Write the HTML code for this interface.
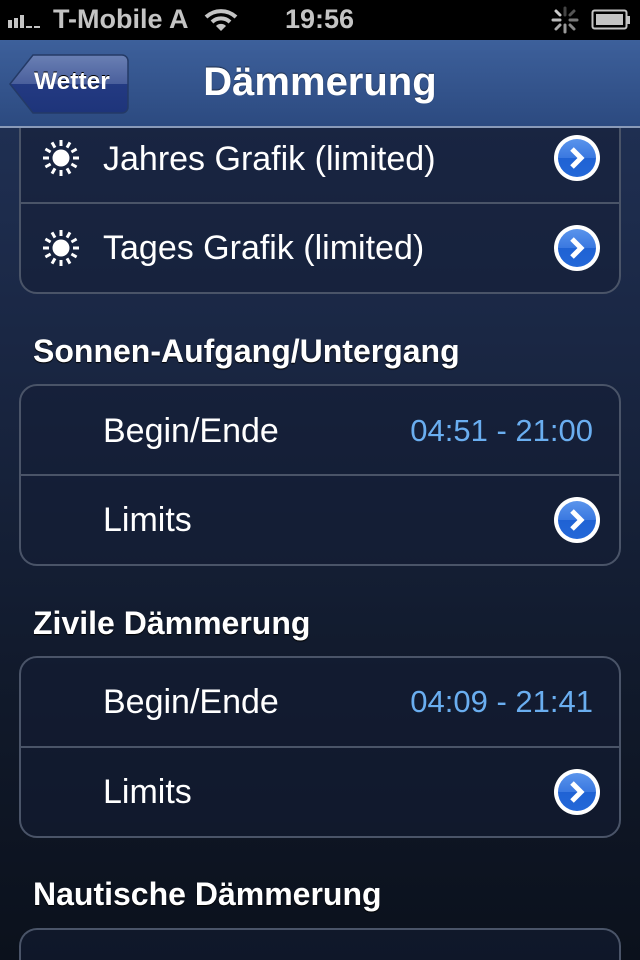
<!DOCTYPE html>
<html><head><meta charset="utf-8"><style>
*{margin:0;padding:0;box-sizing:border-box}
html,body{width:640px;height:960px;overflow:hidden;background:#0b111c}
#w{position:relative;width:640px;height:960px;overflow:hidden;font-family:"Liberation Sans",Arial,sans-serif;background:linear-gradient(#22345a 0%,#1a2744 35%,#111a2c 70%,#0b111c 100%);color:#fff}
.abs{position:absolute}
.status{left:0;top:0;width:640px;height:40px;background:#000;color:#c4c4c4;font-weight:bold;font-size:27px}
.nav{left:0;top:40px;width:640px;height:88px;background:linear-gradient(#3d609b,#2c4a80);border-bottom:2px solid #8a9ab8}
.title{left:0;top:60px;width:640px;height:44px;line-height:44px;text-align:center;font-size:40px;font-weight:bold;text-shadow:0 -1px 1px rgba(0,0,0,.5)}
.group{left:19px;width:602px;border:2px solid #4a5468;border-radius:18px;background:rgba(20,30,52,.55)}
.div{left:19px;width:602px;height:2px;background:#4a5468}
.cell{left:103px;font-size:34px;height:40px;line-height:40px;color:#fff}
.val{right:47px;font-size:31px;height:40px;line-height:40px;color:#6aaef0}
.hdr{left:33px;font-size:32px;height:40px;line-height:40px;font-weight:bold;text-shadow:0 1px 1px #000}
</style></head><body><div id="w">
<div class="abs status">
 <svg class="abs" style="left:8px;top:12px" width="40" height="18"><rect x="0" y="8" width="4" height="8" fill="#c4c4c4"/><rect x="6" y="6" width="4" height="10" fill="#c4c4c4"/><rect x="12" y="3" width="4" height="13" fill="#c4c4c4"/><rect x="18" y="14" width="6" height="2" fill="#c4c4c4"/><rect x="26" y="14" width="6" height="2" fill="#c4c4c4"/></svg>
 <div class="abs" style="left:53px;top:4px">T-Mobile A</div>
 <svg class="abs" style="left:204px;top:8px" width="34" height="24" viewBox="0 0 34 24"><path d="M2 9 A22 22 0 0 1 32 9" stroke="#c4c4c4" stroke-width="4" fill="none"/><path d="M8 14 A13 13 0 0 1 26 14" stroke="#c4c4c4" stroke-width="4" fill="none"/><path d="M12 18 L17 23 L22 18 A7 7 0 0 0 12 18Z" fill="#c4c4c4"/></svg>
 <div class="abs" style="left:285px;top:4px;font-size:27px">19:56</div>
 <svg class="abs" style="left:550px;top:5px" width="30" height="30" viewBox="-15 -15 30 30"><g stroke-width="3" stroke-linecap="round"><line x1="0" y1="-5" x2="0" y2="-12" stroke="#444"/><line x1="5" y1="-5" x2="9" y2="-9" stroke="#555"/><line x1="5" y1="0" x2="12" y2="0" stroke="#777"/><line x1="5" y1="5" x2="9" y2="9" stroke="#888"/><line x1="0" y1="5" x2="0" y2="12" stroke="#999"/><line x1="-5" y1="5" x2="-9" y2="9" stroke="#aaa"/><line x1="-5" y1="0" x2="-12" y2="0" stroke="#bbb"/><line x1="-5" y1="-5" x2="-9" y2="-9" stroke="#ccc"/></g></svg>
 <svg class="abs" style="left:591px;top:9px" width="42" height="22"><rect x="1.5" y="1.5" width="34" height="18" rx="2" fill="none" stroke="#c4c4c4" stroke-width="2"/><rect x="5" y="5" width="27" height="11" fill="#c4c4c4"/><rect x="36" y="7" width="3" height="8" fill="#c4c4c4"/></svg>
</div>
<div class="abs group" style="top:80px;height:214px"></div>
<div class="abs nav"></div>
<svg class="abs" style="left:9px;top:54px" width="121" height="60" viewBox="0 0 121 60"><defs><linearGradient id="bb" x1="0" y1="0" x2="0" y2="1"><stop offset="0" stop-color="#6a80b4"/><stop offset=".5" stop-color="#4a5f9c"/><stop offset=".5" stop-color="#233a82"/><stop offset="1" stop-color="#1e347a"/></linearGradient></defs><path d="M1 30 L24 1 H113 A6 6 0 0 1 119 7 V53 A6 6 0 0 1 113 59 H24 Z" fill="url(#bb)" stroke="#243a66" stroke-width="1.5"/></svg>
<div class="abs" style="left:34px;top:68px;font-size:24.5px;font-weight:bold;text-shadow:0 -1px 0 #000">Wetter</div>
<div class="abs title">Dämmerung</div>

<div class="abs div" style="top:202px"></div>
<div class="abs group" style="top:384px;height:182px"></div>
<div class="abs div" style="top:474px"></div>
<div class="abs group" style="top:656px;height:182px"></div>
<div class="abs div" style="top:746px"></div>
<div class="abs group" style="top:928px;height:32px;border-bottom:none;border-radius:18px 18px 0 0"></div>

<svg width="0" height="0" style="position:absolute"><defs>
<g id="sun"><circle r="8.5" fill="#fff"/><g stroke="#fff" stroke-width="3"><line x1="0" y1="-12" x2="0" y2="-18"/><line x1="0" y1="12" x2="0" y2="18"/><line x1="-12" y1="0" x2="-18" y2="0"/><line x1="12" y1="0" x2="18" y2="0"/><line x1="6" y1="-10.4" x2="9" y2="-15.6"/><line x1="-6" y1="-10.4" x2="-9" y2="-15.6"/><line x1="6" y1="10.4" x2="9" y2="15.6"/><line x1="-6" y1="10.4" x2="-9" y2="15.6"/><line x1="10.4" y1="6" x2="15.6" y2="9"/><line x1="-10.4" y1="6" x2="-15.6" y2="9"/><line x1="10.4" y1="-6" x2="15.6" y2="-9"/><line x1="-10.4" y1="-6" x2="-15.6" y2="-9"/></g></g>
<linearGradient id="bl" x1="0" y1="0" x2="0" y2="1"><stop offset="0" stop-color="#5a94ec"/><stop offset=".5" stop-color="#3a78e0"/><stop offset=".5" stop-color="#1f62d4"/><stop offset="1" stop-color="#2468d8"/></linearGradient>
<g id="disc"><circle r="23" fill="#fff"/><circle r="19" fill="url(#bl)"/><path d="M-5 -9 L4 0 L-5 9" stroke="#fff" stroke-width="5" fill="none" stroke-linejoin="miter"/></g>
</defs></svg>

<svg class="abs" style="left:0;top:128px" width="640" height="832"><use href="#sun" x="61" y="30"/><use href="#sun" x="61" y="120"/><use href="#disc" x="577" y="30"/><use href="#disc" x="577" y="120"/><use href="#disc" x="577" y="392"/><use href="#disc" x="577" y="664"/></svg>

<div class="abs cell" style="top:139px">Jahres Grafik (limited)</div>
<div class="abs cell" style="top:228px">Tages Grafik (limited)</div>
<div class="abs hdr" style="top:331px">Sonnen-Aufgang/Untergang</div>
<div class="abs cell" style="top:411px">Begin/Ende</div>
<div class="abs val" style="top:411px">04:51 - 21:00</div>
<div class="abs cell" style="top:500px">Limits</div>
<div class="abs hdr" style="top:603px">Zivile Dämmerung</div>
<div class="abs cell" style="top:682px">Begin/Ende</div>
<div class="abs val" style="top:682px">04:09 - 21:41</div>
<div class="abs cell" style="top:772px">Limits</div>
<div class="abs hdr" style="top:874px">Nautische Dämmerung</div>
</div></body></html>
